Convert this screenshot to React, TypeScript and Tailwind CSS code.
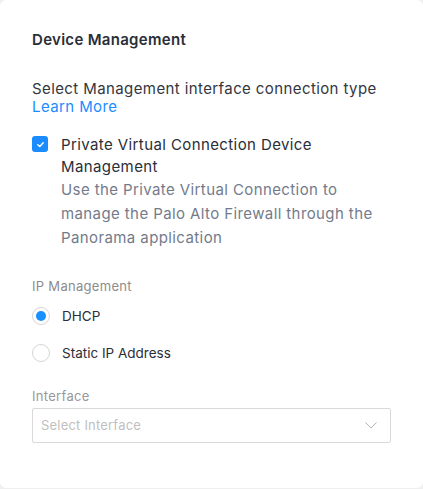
const font = { fontFamily: 'Inter, "Open Sans", sans-serif' };

function Radio({ checked, label }: { checked?: boolean; label: string }) {
  return (
    <label className="flex items-center gap-[12px] h-[20px]">
      <span className="flex h-[18px] w-[18px] items-center justify-center rounded-full border border-[#d6d6d6] bg-white">
        {checked ? <span className="h-[10px] w-[10px] rounded-full bg-[#1890ff]" /> : null}
      </span>
      <span className="text-[13.5px] text-[#2a2e37]">{label}</span>
    </label>
  );
}

export default function App() {
  return (
    <div className="h-[489px] w-[423px] bg-[#efefef]" style={font}>
      <div className="h-[488px] w-[423px] rounded-[6px] bg-white pl-8 pr-[33px] pt-[30px]">
        <h2 className="text-[15px] font-semibold leading-[20px] tracking-[0.3px] text-[#2a2e37]">Device Management</h2>

        <p className="mt-[30px] text-[15px] leading-[18px] tracking-[0.4px] text-[#333640]">
          Select Management interface connection type
        </p>
        <a className="block text-[15px] leading-[18px] tracking-[0.4px] text-[#1a8cff]">Learn More</a>

        <div className="mt-[18px] flex gap-[13px]">
          <span className="mt-[2px] flex h-[16px] w-[16px] shrink-0 items-center justify-center rounded-[3px] bg-[#1a8cff]">
            <svg width="9" height="9" viewBox="0 0 10 10" fill="none">
              <path d="M2 5.2 4.2 7.2 8 3" stroke="white" strokeWidth="1.6" strokeLinecap="round" strokeLinejoin="round" />
            </svg>
          </span>
          <div className="tracking-[0.4px]">
            <p className="text-[15px] leading-[22px] text-[#2a2e37]">Private Virtual Connection Device Management</p>
            <p className="text-[15px] leading-[24px] text-[#737b8b]">
              Use the Private Virtual Connection to manage the Palo Alto Firewall through the Panorama application
            </p>
          </div>
        </div>

        <p className="mt-[27px] text-[13px] leading-[18px] tracking-[0.3px] text-[#8c8c8c]">IP Management</p>
        <div className="mt-[11px] flex flex-col gap-[17px]">
          <Radio checked label="DHCP" />
          <Radio label="Static IP Address" />
        </div>

        <p className="mt-[24px] text-[13px] leading-[18px] tracking-[0.3px] text-[#999999]">Interface</p>
        <div className="mt-[3px] flex h-[35px] w-[359px] items-center justify-between rounded-[2px] border border-[#d9d9d9] pl-[8px] pr-[13px]">
          <span className="text-[13px] tracking-[0.2px] text-[#bfbfbf]">Select Interface</span>
          <svg width="12" height="7" viewBox="0 0 12 7" fill="none">
            <path d="M0.5 0.5 6 6 11.5 0.5" stroke="#b3b3b3" strokeWidth="1" />
          </svg>
        </div>
      </div>
    </div>
  );
}
